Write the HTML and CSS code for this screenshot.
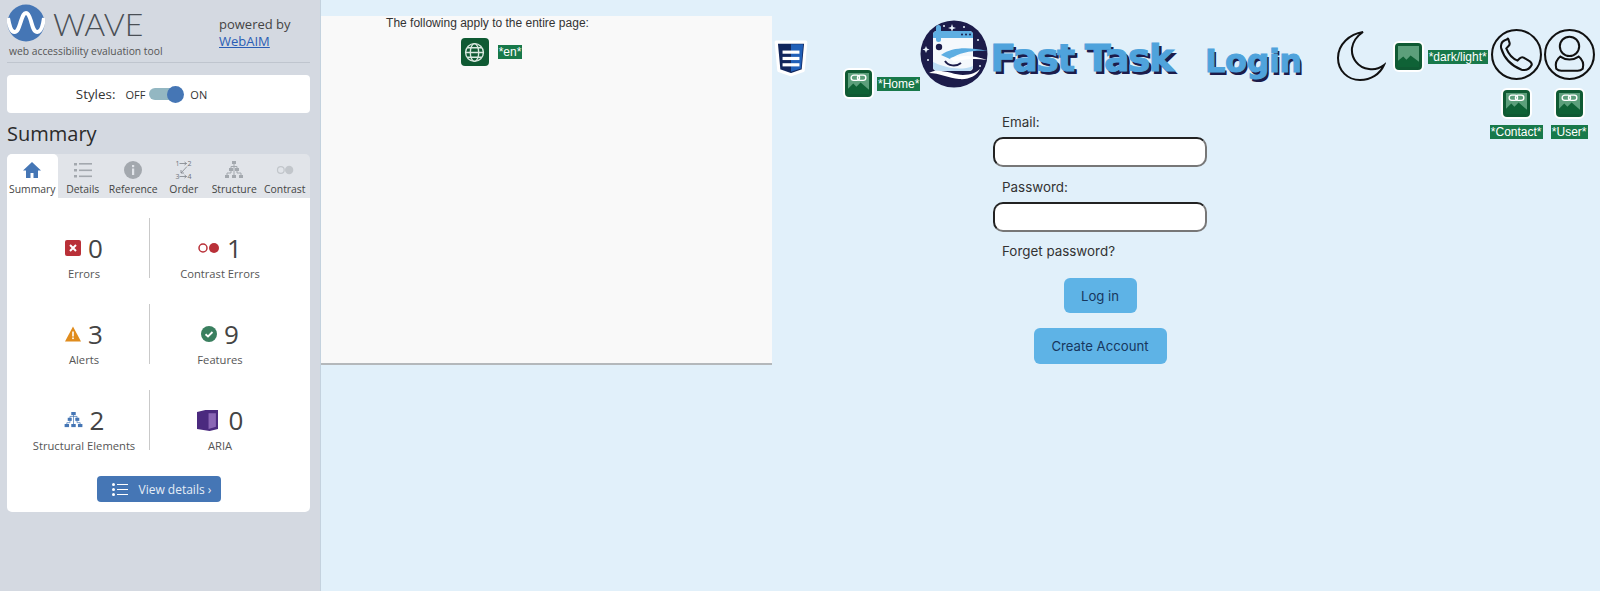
FILE: index.html
```html
<!DOCTYPE html>
<html lang="en">
<head>
    <meta charset="UTF-8">
    <title>Fast Task - Login</title>
    <link rel="stylesheet" href="styles.css">
</head>
<body>

<aside class="wave">
    <div class="wave-head">
        <div class="wave-brand">
            <div class="wave-logo-row">
                <svg class="wave-logo" viewBox="0 0 38 38">
                    <circle cx="19" cy="19" r="18.5" fill="#4576b5"/>
                    <path d="M1 14c1.500 8 3 14 6.500 14S12 23 14 17s3-8 5-8 3.500 3 5 8 2.500 11 6.500 11S36 21 37 14" fill="none" stroke="#fff" stroke-width="4"/>
                </svg>
                <span class="wave-name">WAVE</span>
            </div>
            <div class="wave-sub">web accessibility evaluation tool</div>
        </div>
        <div class="wave-powered">powered by<br><a href="#">WebAIM</a></div>
    </div>

    <div class="styles-card">
        <span class="styles-label">Styles:</span>
        <span class="styles-opt">OFF</span>
        <span class="toggle"><span class="toggle-knob"></span></span>
        <span class="styles-opt">ON</span>
    </div>

    <h2 class="summary-title">Summary</h2>

    <div class="tabs">
        <div class="tab tab-active">
            <svg class="tab-icon" viewBox="0 0 20 20"><path d="M10 2 1 10.500h3V18h4.500v-5h3v5H16v-7.500h3z" fill="#4576b5"/></svg>
            Summary
        </div>
        <div class="tab">
            <svg class="tab-icon" viewBox="0 0 20 20"><g fill="#a3a8ae"><rect x="1" y="3" width="3" height="2.500"/><rect x="1" y="9" width="3" height="2.500"/><rect x="1" y="15" width="3" height="2.500"/><rect x="6" y="3" width="13" height="1.600"/><rect x="6" y="9.500" width="13" height="1.600"/><rect x="6" y="15.500" width="13" height="1.600"/></g></svg>
            Details
        </div>
        <div class="tab">
            <svg class="tab-icon" viewBox="0 0 20 20"><circle cx="10" cy="10" r="9" fill="#a3a8ae"/><rect x="9" y="8.500" width="2.200" height="6.500" fill="#e1e4e9"/><rect x="9" y="5" width="2.200" height="2.200" fill="#e1e4e9"/></svg>
            Reference
        </div>
        <div class="tab">
            <svg class="tab-icon" viewBox="0 0 20 20"><path d="M5.500 3.500h7M10.500 2l2 1.500-2 1.500M5.500 16.500h7M10.500 15l2 1.500-2 1.500M13 6.500 7 13M7 10v3h3" fill="none" stroke="#7d8288" stroke-width=".8"/><g fill="#6f7379" font-family="Open Sans" font-size="7"><text x="1.500" y="6">1</text><text x="13.500" y="6">2</text><text x="1.500" y="19">3</text><text x="13.500" y="19">4</text></g></svg>
            Order
        </div>
        <div class="tab">
            <svg class="tab-icon" viewBox="0 0 20 20"><g fill="#a3a8ae"><rect x="8" y="1" width="4" height="3"/><rect x="5" y="8" width="4" height="3"/><rect x="11" y="8" width="4" height="3"/><rect x="1" y="15" width="4" height="3"/><rect x="8" y="15" width="4" height="3"/><rect x="15" y="15" width="4" height="3"/></g><path d="M10 4v11M7 11v2H3v2M13 11v2h4v2M7 8V6.500h6V8" fill="none" stroke="#a3a8ae"/></svg>
            Structure
        </div>
        <div class="tab">
            <svg class="tab-icon" viewBox="0 0 24 20"><circle cx="7" cy="10" r="4" fill="none" stroke="#c2c6cb" stroke-width="1.500"/><circle cx="17" cy="10" r="5" fill="#c2c6cb"/></svg>
            Contrast
        </div>
    </div>

    <div class="summary-card">
        <div class="stats">
            <div class="stat">
                <div class="stat-top">
                    <svg class="stat-icon" viewBox="0 0 16 16"><rect width="16" height="16" rx="2" fill="#b93038"/><path d="M5 5l6 6M11 5l-6 6" stroke="#fff" stroke-width="2"/></svg>
                    <span class="stat-num">0</span>
                </div>
                <div class="stat-label">Errors</div>
            </div>
            <div class="stat">
                <div class="stat-top">
                    <svg class="stat-icon stat-icon-wide" viewBox="0 0 22 12"><circle cx="5" cy="6" r="4" fill="none" stroke="#b93038" stroke-width="1.500"/><circle cx="16" cy="6" r="5" fill="#b93038"/></svg>
                    <span class="stat-num">1</span>
                </div>
                <div class="stat-label">Contrast Errors</div>
            </div>
            <div class="stat">
                <div class="stat-top">
                    <svg class="stat-icon" viewBox="0 0 16 15"><path d="M8 0 16 15H0z" fill="#e08c1d"/><rect x="7.200" y="5" width="1.600" height="5" fill="#fff"/><rect x="7.200" y="11" width="1.600" height="1.600" fill="#fff"/></svg>
                    <span class="stat-num">3</span>
                </div>
                <div class="stat-label">Alerts</div>
            </div>
            <div class="stat">
                <div class="stat-top">
                    <svg class="stat-icon" viewBox="0 0 16 16"><circle cx="8" cy="8" r="8" fill="#3a7f5f"/><path d="M4.500 8.300 7 10.500l4.500-4.500" fill="none" stroke="#fff" stroke-width="1.800"/></svg>
                    <span class="stat-num">9</span>
                </div>
                <div class="stat-label">Features</div>
            </div>
            <div class="stat">
                <div class="stat-top">
                    <svg class="stat-icon stat-icon-struct" viewBox="0 0 20 18"><g fill="#4576b5"><rect x="7.500" y="0" width="5" height="3.500"/><rect x="3.500" y="6.500" width="4.500" height="3.500"/><rect x="12" y="6.500" width="4.500" height="3.500"/><rect x="0" y="13.500" width="5" height="3.500"/><rect x="7.500" y="13.500" width="5" height="3.500"/><rect x="15" y="13.500" width="5" height="3.500"/></g><path d="M10 3v11M6 10v2H2.500v2M14 10v2h3.500v2M6 7V5h8v2" fill="none" stroke="#4576b5" stroke-width=".8"/></svg>
                    <span class="stat-num">2</span>
                </div>
                <div class="stat-label">Structural Elements</div>
            </div>
            <div class="stat">
                <div class="stat-top">
                    <svg class="stat-icon stat-icon-aria" viewBox="0 0 20 20"><path d="M0 2 8 0h12v18l-8 2-12-2z" fill="#4b2a7f"/><path d="M11 3h7v13l-7 2z" fill="#8a66b5"/></svg>
                    <span class="stat-num">0</span>
                </div>
                <div class="stat-label">ARIA</div>
            </div>
        </div>
        <a class="details-btn" href="#">
            <svg class="details-icon" viewBox="0 0 16 13"><g fill="#fff"><circle cx="1.500" cy="1.500" r="1.500"/><circle cx="1.500" cy="6.500" r="1.500"/><circle cx="1.500" cy="11.500" r="1.500"/><rect x="5" y="1" width="11" height="1"/><rect x="5" y="6" width="11" height="1"/><rect x="5" y="11" width="11" height="1"/></g></svg>
            View details ›
        </a>
    </div>
</aside>

<div class="page">
    <div class="page-panel">
        <p class="panel-text">The following apply to the entire page:</p>
        <div class="panel-row">
            <span class="w-icon">
                <svg viewBox="0 0 20 20" class="w-svg"><g fill="none" stroke="#d9e8df" stroke-width="1.300"><circle cx="10" cy="10" r="8.500"/><ellipse cx="10" cy="10" rx="4" ry="8.500"/><path d="M1.500 10h17M3 5.500h14M3 14.500h14"/></g></svg>
            </span>
            <span class="w-tag">*en*</span>
        </div>
    </div>

    <div class="site">
        <header class="site-head">
            <svg viewBox="-2 -2 32 36" class="css-badge">
                <path d="M0 0h28l-2.500 27L14 31 2.500 27z" fill="#11265c" stroke="#fff" stroke-width="3" stroke-linejoin="round"/>
                <path d="M14 2h11.500l-2 23L14 28z" fill="#2160b8"/>
                <g fill="#fff"><rect x="6" y="8" width="16" height="3"/><rect x="6" y="14" width="16" height="3"/><rect x="6" y="20" width="16" height="3"/></g>
            </svg>
            <span class="home-link">
                <span class="w-icon w-icon-img">
                    <svg viewBox="0 0 20 20" class="w-svg"><use href="#img-link-glyph"/></svg>
                </span>
                <span class="w-tag">*Home*</span>
            </span>
            <svg class="site-logo" viewBox="0 0 68 68">
                <circle cx="34" cy="34" r="33.500" fill="#1c1c4a"/>
                <g fill="#e9f3fb"><path d="M32 4l1 3 3 1-3 1-1 3-1-3-3-1 3-1z"/><path d="M6 26l1 2.500 2.500 1-2.500 1-1 2.500-1-2.500-2.500-1 2.500-1z"/><circle cx="44" cy="7" r="1"/><circle cx="24" cy="6" r="1"/><circle cx="58" cy="20" r="1"/><circle cx="60" cy="46" r="1"/><circle cx="8" cy="40" r="1"/></g>
                <rect x="13" y="11" width="40" height="40" rx="4" fill="#f4f8fc"/>
                <path d="M13 15a4 4 0 0 1 4-4h32a4 4 0 0 1 4 4v3H13z" fill="#5eaee2"/>
                <g fill="#1c1c4a"><circle cx="42" cy="14.500" r="1"/><circle cx="46" cy="14.500" r="1"/><circle cx="50" cy="14.500" r="1"/></g>
                <rect x="16" y="5" width="5" height="17" rx="2.500" fill="#5eaee2"/>
                <circle cx="19" cy="27" r="3.200" fill="#1c1c4a"/>
                <path d="M13 42c8 4 26 10 40 4v-1c0 4-2 6-5 6H17c-2 0-4-2-4-4z" fill="#bcdcf4"/>
                <path d="M25 41c3 5 11 6 16 2" fill="none" stroke="#1c1c4a" stroke-width="2"/>
                <path d="M21 35c12-8 26-8 47-4-14-1-28 1-38 8z" fill="#5eaee2"/>
                <path d="M30 38c12-3 24-3 37 2-12-2-24-1-33 2z" fill="#fff"/>
                <path d="M9 53c10-6 24 2 34 2 8 0 14-3 17-6-3 7-12 11-21 10-10-1-20-6-30-6z" fill="#fff"/>
            </svg>
            <h1 class="site-name">Fast Task</h1>
            <h2 class="page-name">Login</h2>
            <svg class="moon" viewBox="0 0 50 52"><path d="M27 2C14 4 2 14 2 28c0 13 10 22 22 22 11 0 20-6 24-15-4 3-10 5-15 4-11-1-18-11-17-21 1-6 5-12 11-16z" fill="none" stroke="#111" stroke-width="2"/></svg>
            <span class="dark-link">
                <span class="w-icon w-icon-img">
                    <svg viewBox="0 0 20 20" class="w-svg"><use href="#img-glyph"/></svg>
                </span>
                <span class="w-tag">*dark/light*</span>
            </span>
            <div class="round-link">
                <svg class="round-icon" viewBox="0 0 50 50"><circle cx="25" cy="25" r="24" fill="none" stroke="#111" stroke-width="2"/><path d="M16 10c-4 1-7 4-6 9 3 10 10 17 20 21 5 1 8-1 10-5 0-2-1-3-3-4l-5-3c-2-1-3 0-4 1l-2 2c-5-2-9-7-11-12l2-2c1-1 2-2 1-4l-1-3c0-1-1-1-1 0z" fill="none" stroke="#111" stroke-width="2"/></svg>
                <span class="w-icon w-icon-img">
                    <svg viewBox="0 0 20 20" class="w-svg"><use href="#img-link-glyph"/></svg>
                </span>
                <span class="w-tag">*Contact*</span>
            </div>
            <div class="round-link">
                <svg class="round-icon" viewBox="0 0 50 50"><circle cx="25" cy="25" r="24" fill="none" stroke="#111" stroke-width="2"/><circle cx="25" cy="17" r="9.500" fill="none" stroke="#111" stroke-width="2"/><path d="M16 27c-4 3-5 8-4 12 1 1 3 2 5 2h16c2 0 4-1 5-2 1-4 0-9-4-12-3 2-6 3-9 3s-6-1-9-3z" fill="none" stroke="#111" stroke-width="2"/></svg>
                <span class="w-icon w-icon-img">
                    <svg viewBox="0 0 20 20" class="w-svg"><use href="#img-link-glyph"/></svg>
                </span>
                <span class="w-tag">*User*</span>
            </div>
        </header>

        <form class="login">
            <label class="login-label" for="email">Email:</label>
            <input class="login-input" type="text" id="email">
            <label class="login-label" for="password">Password:</label>
            <input class="login-input" type="password" id="password">
            <a class="login-label login-forgot" href="#">Forget password?</a>
            <button class="login-btn" type="button">Log in</button>
            <button class="login-btn login-btn-wide" type="button">Create Account</button>
        </form>
    </div>
</div>

<svg class="defs" width="0" height="0">
    <symbol id="img-glyph" viewBox="0 0 20 20">
        <rect x="0" y="0" width="20" height="17" fill="#5c9f7b"/>
        <path d="M0 14l5-4 3 3 4-4 8 6v5H0z" fill="#0f6236"/>
    </symbol>
    <symbol id="img-link-glyph" viewBox="0 0 20 20">
        <rect x="0" y="0" width="20" height="17" fill="#5c9f7b"/>
        <path d="M0 15l5-5 3 3 4-4 8 7v4H0z" fill="#0f6236"/>
        <g fill="none" stroke="#fff" stroke-width="1.300"><rect x="3" y="2" width="8" height="5" rx="2.500"/><rect x="9" y="2" width="8" height="5" rx="2.500"/></g>
    </symbol>
</svg>

</body>
</html>
```

FILE: styles.css
```css
* {
    box-sizing: border-box;
}
html, body {
    height: 100%;
}
body {
    margin: 0;
    display: flex;
    background: #e1f0fa;
    font-family: "Open Sans", sans-serif;
    color: #333;
    overflow: hidden;
}
.defs {
    position: absolute;
}

/* wave sidebar */
.wave {
    width: 321px;
    flex: none;
    background: #d4d9e1;
    padding: 4px 10px 0 7px;
    border-right: 1px solid #c4d2de;
}
.wave-head {
    display: flex;
    justify-content: space-between;
    height: 59px;
    border-bottom: 1px solid #bfc5ce;
}
.wave-logo-row {
    display: flex;
    align-items: center;
    height: 38px;
}
.wave-logo {
    width: 38px;
    height: 38px;
}
.wave-name {
    margin-left: 8px;
    font-family: Lato, sans-serif;
    font-weight: 300;
    font-size: 32px;
    color: #4a4f55;
}
.wave-sub {
    margin: 2px 0 0 2px;
    font-size: 10.300px;
    color: #555;
}
.wave-powered {
    margin: 12px 24px 0 0;
    font-size: 13px;
    line-height: 17px;
    width: 67px;
    white-space: nowrap;
    color: #444;
}
.wave-powered a {
    color: #2a5db5;
}
.styles-card {
    display: flex;
    align-items: center;
    justify-content: center;
    height: 38px;
    margin-top: 12px;
    padding-right: 34px;
    background: #fff;
    border-radius: 4px;
    font-size: 11px;
}
.styles-label {
    font-size: 13.400px;
    margin-right: 10px;
}
.styles-opt {
    color: #333;
}
.toggle {
    position: relative;
    width: 30px;
    height: 12px;
    margin: 0 11px 0 4px;
    border-radius: 6px;
    background: #93b7c2;
}
.toggle-knob {
    position: absolute;
    top: -2.500px;
    right: -5px;
    width: 17px;
    height: 17px;
    border-radius: 50%;
    background: #4576b5;
}
.summary-title {
    margin: 7px 0 7px;
    font-size: 20px;
    line-height: 27px;
    font-weight: 400;
    color: #2b2b2b;
}
.tabs {
    display: flex;
    height: 44px;
    background: #e1e4e9;
    border-radius: 5px 5px 0 0;
}
.tab {
    width: 50.500px;
    display: flex;
    flex-direction: column;
    align-items: center;
    padding-top: 6px;
    font-size: 10.400px;
    white-space: nowrap;
    color: #444;
}
.tab-active {
    background: #fff;
    border-radius: 5px 5px 0 0;
}
.tab-icon {
    width: 20px;
    height: 20px;
    margin-bottom: 2px;
}
.summary-card {
    height: 314px;
    padding-top: 20px;
    background: #fff;
    border-radius: 0 0 5px 5px;
}
.stats {
    display: grid;
    grid-template-columns: 143px 1fr;
    row-gap: 26px;
}
.stat {
    height: 60px;
    display: flex;
    flex-direction: column;
    align-items: center;
    padding: 16px 20px 0 0;
}
.stat:nth-child(odd) {
    padding: 16px 0 0 12px;
    border-right: 1px solid #c9c9c9;
}
.stat-top {
    display: flex;
    align-items: center;
    height: 28px;
}
.stat-icon {
    width: 16px;
    height: 16px;
    margin-right: 7px;
}
.stat-icon-wide {
    width: 22px;
}
.stat-icon-struct {
    width: 19px;
}
.stat-icon-aria {
    width: 21px;
    height: 21px;
    margin-right: 11px;
}
.stat-num {
    font-size: 26px;
    color: #444;
}
.stat-label {
    margin-top: 4px;
    font-size: 11.200px;
    color: #555;
}
.details-btn {
    display: flex;
    align-items: center;
    width: 124px;
    height: 26px;
    margin: 26px auto 0;
    padding-left: 15px;
    background: #4576b5;
    border-radius: 4px;
    color: #e6edf6;
    font-size: 12px;
    text-decoration: none;
}
.details-icon {
    width: 16px;
    height: 13px;
    margin-right: 11px;
}

/* the page under test */
.page {
    flex: 1;
    display: flex;
    align-items: flex-start;
    padding-top: 16px;
}
.page-panel {
    width: 451px;
    height: 349px;
    flex: none;
    padding-right: 118px;
    text-align: center;
    background: #f9f9f9;
    border-bottom: 2px solid #b4b8bb;
    font-family: "Liberation Sans", sans-serif;
    font-size: 12px;
    color: #333;
}
.panel-text {
    margin: 0;
    line-height: 15px;
}
.panel-row {
    display: flex;
    align-items: center;
    justify-content: center;
    gap: 9px;
    margin: 7px 0 0 8px;
}
.w-icon {
    width: 28px;
    height: 28px;
    flex: none;
    display: inline-flex;
    align-items: center;
    justify-content: center;
    background: #0f5a33;
    border-radius: 4px;
}
.w-icon-img {
    width: 31px;
    height: 31px;
    border: 2px solid #fff;
    border-radius: 6px;
}
.w-svg {
    width: 21px;
    height: 21px;
}
.w-tag {
    padding: 0 1px;
    background: #18794a;
    color: #fff;
    font-family: "Liberation Sans", sans-serif;
    font-size: 12px;
    line-height: 14px;
    white-space: nowrap;
}
.site {
    flex: 1;
    min-width: 0;
    margin-top: -16px;
}
.site-head {
    display: flex;
    align-items: flex-start;
    height: 113px;
}
.css-badge {
    width: 36px;
    height: 38px;
    margin: 40px 0 0 1px;
    flex: none;
}
.home-link {
    display: flex;
    align-items: center;
    gap: 3px;
    margin: 68px 0 0 34px;
    flex: none;
}
.site-logo {
    width: 68px;
    height: 68px;
    margin: 20px 0 0 0;
    flex: none;
}
.site-name {
    margin: 33px 0 0 2px;
    font-family: "DejaVu Sans", sans-serif;
    font-weight: 700;
    font-size: 38px;
    letter-spacing: -1.800px;
    line-height: 50px;
    color: #4fa3dc;
    -webkit-text-stroke: 1px #4fa3dc;
    text-shadow: 2px 3px 0 #1c1c4a, 3px 3px 0 #1c1c4a;
    white-space: nowrap;
}
.page-name {
    margin: 41px 0 0 33px;
    font-family: "DejaVu Sans", sans-serif;
    font-weight: 700;
    font-size: 32px;
    letter-spacing: -0.500px;
    line-height: 40px;
    color: #4fa3dc;
    -webkit-text-stroke: 1px #4fa3dc;
    text-shadow: 2px 3px 0 #1c1c4a;
}
.moon {
    width: 50px;
    height: 52px;
    margin: 30px 0 0 34px;
    flex: none;
}
.dark-link {
    display: flex;
    align-items: center;
    gap: 4px;
    margin: 41px 2px 0 7px;
    flex: none;
}
.round-link {
    display: flex;
    flex-direction: column;
    align-items: center;
    width: 53px;
    margin-top: 29px;
    flex: none;
}
.round-icon {
    width: 51px;
    height: 51px;
    margin-bottom: 8px;
}
.round-link .w-tag {
    margin-top: 6px;
}
.login {
    width: 214px;
    margin-left: 221px;
    display: flex;
    flex-direction: column;
    align-items: center;
    font-family: Inter, sans-serif;
    font-size: 13.400px;
}
.login-label {
    align-self: flex-start;
    margin-left: 9px;
    color: #333;
    text-decoration: none;
    line-height: 18px;
}
.login-input {
    width: 214px;
    height: 30px;
    margin: 6px 0 11px;
    border: 2px solid #222;
    border-bottom-color: #777;
    border-right-color: #777;
    border-radius: 10px;
    background: #fff;
}
.login-forgot {
    margin-top: -1px;
}
.login-btn {
    height: 35px;
    width: 73px;
    margin-top: 18px;
    border: 0;
    border-radius: 6px;
    background: #5eb3e6;
    color: #17375e;
    font-family: Inter, sans-serif;
    font-size: 13.200px;
}
.login-btn-wide {
    width: 133px;
    height: 36px;
    margin-top: 15px;
}
```
